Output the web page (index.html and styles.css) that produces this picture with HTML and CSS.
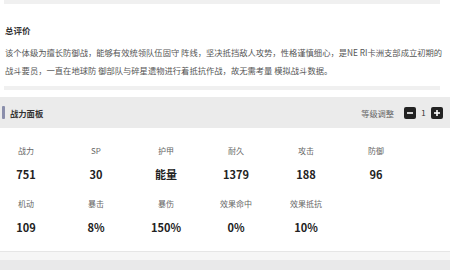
FILE: index.html
```html
<!DOCTYPE html>
<html lang="zh-CN">
<head>
    <meta charset="UTF-8">
    <meta name="viewport" content="width=device-width, initial-scale=1.0">
    <title>战力面板</title>
    <link rel="stylesheet" href="styles.css">
</head>
<body>
    <div class="edge"></div>

    <section class="summary">
        <h3 class="summary-title">总评价</h3>
        <p class="summary-text">该个体级为擅长防御战，能够有效统领队伍固守 阵线，坚决抵挡敌人攻势，性格谨慎细心，是NE RI卡洲支部成立初期的战斗要员，一直在地球防 御部队与碎星遗物进行着抵抗作战，故无需考量 模拟战斗数据。</p>
    </section>

    <div class="edge"></div>

    <section class="panel">
        <div class="panel-head">
            <span class="panel-title">战力面板</span>
            <div class="level">
                <span class="level-label">等级调整</span>
                <button class="level-btn" type="button">
                    <svg width="8" height="8" viewBox="0 0 8 8"><rect x="1" y="3.2" width="6" height="1.6" fill="#fff"/></svg>
                </button>
                <span class="level-value">1</span>
                <button class="level-btn" type="button">
                    <svg width="8" height="8" viewBox="0 0 8 8"><rect x="1" y="3.2" width="6" height="1.6" fill="#fff"/><rect x="3.2" y="1" width="1.6" height="6" fill="#fff"/></svg>
                </button>
            </div>
        </div>

        <div class="stats">
            <div class="stat"><span class="stat-label">战力</span><span class="stat-value">751</span></div>
            <div class="stat"><span class="stat-label">SP</span><span class="stat-value">30</span></div>
            <div class="stat"><span class="stat-label">护甲</span><span class="stat-value">能量</span></div>
            <div class="stat"><span class="stat-label">耐久</span><span class="stat-value">1379</span></div>
            <div class="stat"><span class="stat-label">攻击</span><span class="stat-value">188</span></div>
            <div class="stat"><span class="stat-label">防御</span><span class="stat-value">96</span></div>
            <div class="stat"><span class="stat-label">机动</span><span class="stat-value">109</span></div>
            <div class="stat"><span class="stat-label">暴击</span><span class="stat-value">8%</span></div>
            <div class="stat"><span class="stat-label">暴伤</span><span class="stat-value">150%</span></div>
            <div class="stat"><span class="stat-label">效果命中</span><span class="stat-value">0%</span></div>
            <div class="stat"><span class="stat-label">效果抵抗</span><span class="stat-value">10%</span></div>
        </div>
    </section>

    <div class="panel-foot"></div>
    <div class="next-head"></div>
</body>
</html>
```

FILE: styles.css
```css
body {
    margin: 0;
    background-color: #fff;
    font-family: "Noto Sans CJK SC", "Noto Sans", sans-serif;
    color: #333;
    overflow: hidden;
}
.edge {
    height: 4px;
    margin: 0 10px 0 4px;
    background-color: #f0f0f0;
}
.summary {
    padding: 20px 5px 7px 5px;
}
.summary-title {
    margin: 0 0 7px 0;
    font-size: 8.5px;
    line-height: 12px;
    font-weight: bold;
    color: #333;
}
.summary-text {
    margin: 0;
    font-size: 8.3px;
    line-height: 18px;
    color: #555;
}
.panel {
    margin-top: 7px;
}
.panel-head {
    display: flex;
    align-items: center;
    justify-content: space-between;
    height: 31px;
    padding: 0 7px 0 2px;
    background-color: #ebebeb;
}
.panel-title {
    display: flex;
    align-items: center;
    gap: 5px;
    font-size: 8.3px;
    font-weight: bold;
    color: #333;
}
.panel-title::before {
    content: "";
    width: 3px;
    height: 13px;
    border-radius: 1px;
    background-color: #8a8eab;
}
.level {
    display: flex;
    align-items: center;
}
.level-label {
    font-size: 8.2px;
    color: #666;
    margin-right: 10px;
}
.level-btn {
    display: flex;
    align-items: center;
    justify-content: center;
    width: 12px;
    height: 12px;
    padding: 0;
    border: none;
    border-radius: 2px;
    background-color: #222;
}
.level-value {
    font-size: 8px;
    color: #333;
    width: 15px;
    text-align: center;
}
.stats {
    display: grid;
    grid-template-columns: repeat(6, 52px);
    column-gap: 18px;
    row-gap: 16px;
    padding: 17px 0 16px 0;
}
.stat {
    display: flex;
    flex-direction: column;
    align-items: center;
    gap: 9px;
}
.stat-label {
    font-size: 8px;
    line-height: 12px;
    color: #666;
}
.stat-value {
    font-size: 11px;
    line-height: 16px;
    font-weight: bold;
    color: #222;
}
.panel-foot {
    height: 8px;
    border-top: 1px solid #e6e6e6;
    background-color: #f6f6f6;
}
.next-head {
    height: 20px;
    background-color: #e9e9ea;
}
```
